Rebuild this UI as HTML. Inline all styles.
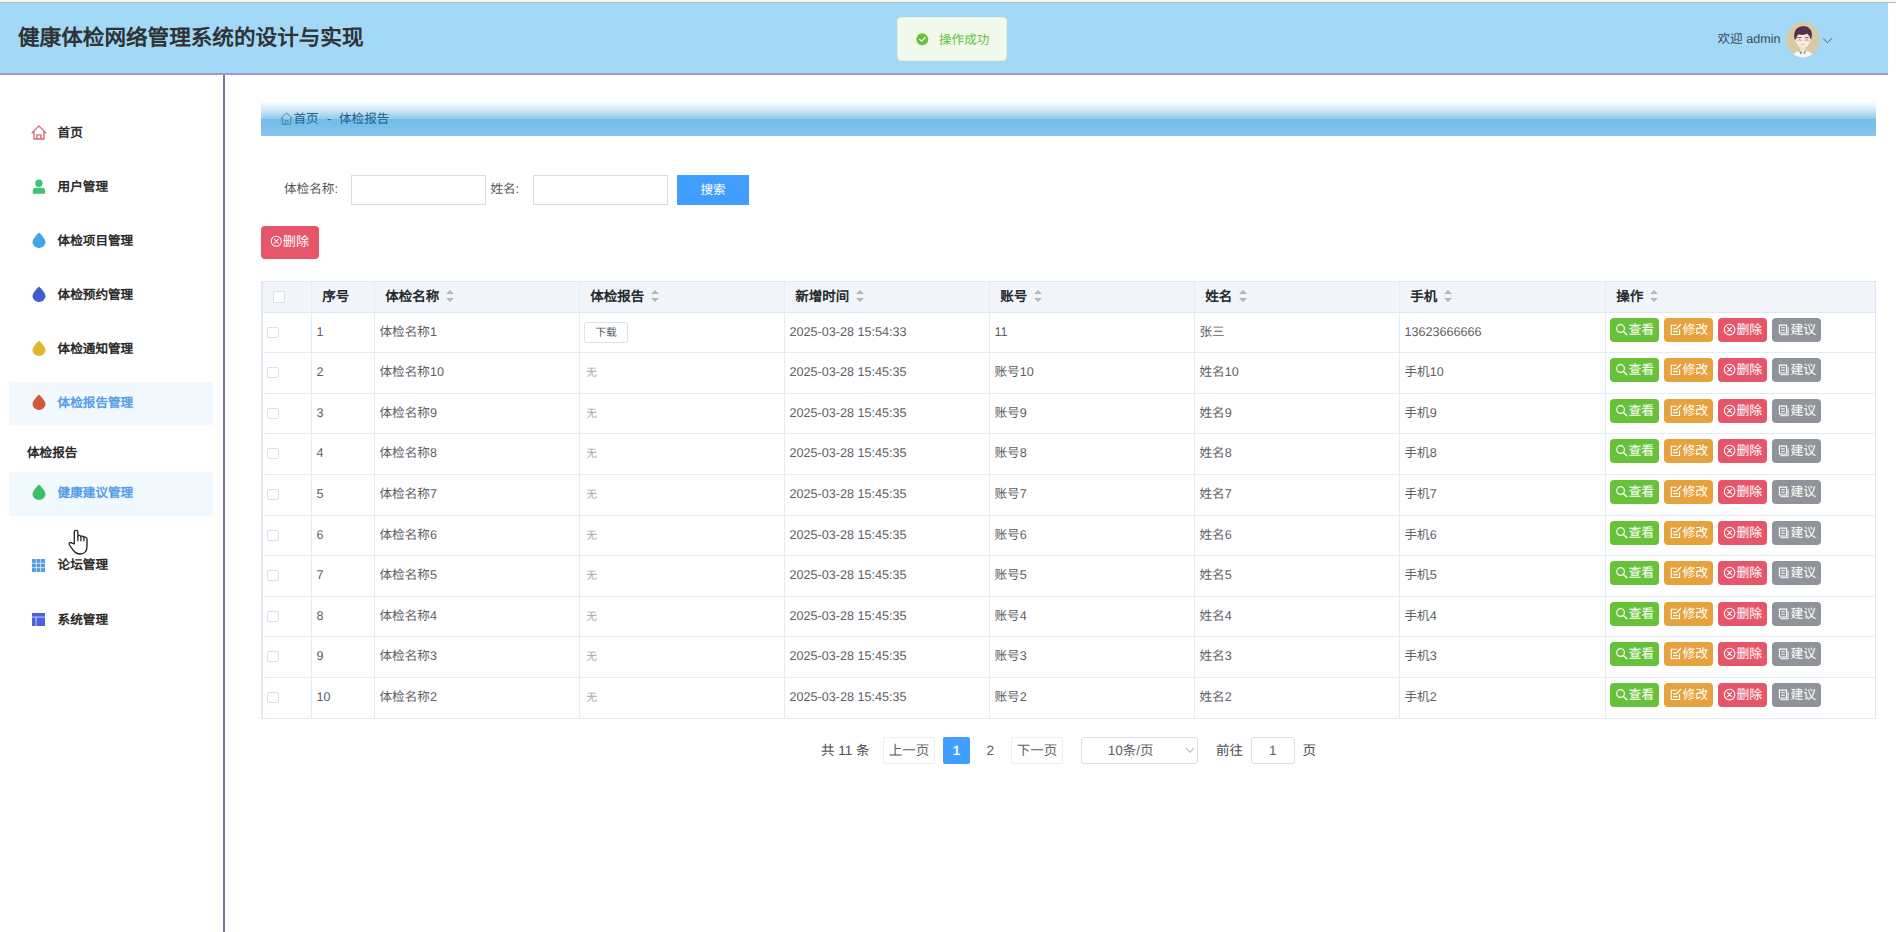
<!DOCTYPE html>
<html lang="zh-CN"><head><meta charset="utf-8"><title>体检报告</title>
<style>
*{box-sizing:border-box;margin:0;padding:0}
html,body{width:1896px;height:932px;overflow:hidden;background:#fff}
body{position:relative;font-family:"Liberation Sans",sans-serif;font-size:12.6px;color:#333;line-height:1;text-rendering:geometricPrecision}
.ic{display:inline-block;vertical-align:middle;flex:none}
.abs{position:absolute}
/* top strip + header */
.strip{position:absolute;left:0;top:0;width:1896px;height:2.8px;background:linear-gradient(#f6f8f7 0,#f3f6f5 55%,#b3bec3 78%,#b0bcc2 100%)}
.hdr{position:absolute;left:0;top:2.8px;width:1888px;height:72px;background:#a3d9f7;border-bottom:2px solid #ab94cc}
.title{position:absolute;left:18px;top:25.1px;font-size:21.6px;font-weight:bold;color:#2f3336;white-space:nowrap;line-height:26px;letter-spacing:0}
.toast{position:absolute;left:897px;top:16.6px;width:110px;height:44.8px;background:#f0f9eb;border:1px solid #e1f3d8;border-radius:4px}
.toast .tx{position:absolute;left:41px;top:15.4px;color:#67c23a;font-size:12.6px;white-space:nowrap;line-height:14px}
.welcome{position:absolute;left:1717.5px;top:31.6px;font-size:12.6px;color:#3a4a5a;white-space:nowrap;line-height:15px}
/* sidebar */
.sline{position:absolute;left:222.9px;top:75px;width:2.4px;height:857px;background:#7f71bb}
.mi{position:absolute;left:9px;width:204.4px;height:43.4px;border-radius:2px}
.mi.act{background:#f1f8fe}
.mi .tx{position:absolute;left:48.6px;top:14.5px;font-size:12.6px;font-weight:bold;color:#2b2b2b;white-space:nowrap;line-height:16px}
.mi.act .tx{color:#579de8}
.mi svg{position:absolute;left:21.8px;top:13.3px}
.sub{position:absolute;left:27px;top:444.6px;font-size:12.6px;font-weight:bold;color:#2b2b2b;white-space:nowrap;line-height:16px}
/* breadcrumb */
.bc{position:absolute;left:261px;top:102.2px;width:1615px;height:33.6px;background:linear-gradient(to bottom,#fafdff 0%,#e3f1fb 14%,#c2e1f5 30%,#a3d3f0 42%,#97ceee 48.5%,#74bde8 51%,#78bfe9 70%,#86c6eb 100%)}
.bc .tx{position:absolute;top:10.2px;font-size:12.6px;color:#1f608f;white-space:nowrap;line-height:15px}
/* search */
.lab{position:absolute;font-size:12.6px;color:#555;white-space:nowrap;line-height:15px;top:182px}
.inp{position:absolute;top:175px;height:29.5px;width:135px;border:1px solid #dcdcdc;border-radius:0;background:#fff}
.sbtn{position:absolute;left:677.2px;top:175px;width:71.8px;height:29.5px;background:#409eff;color:#fff;font-size:12.6px;text-align:center;line-height:30.4px;border-radius:0}
.del{position:absolute;left:261px;top:226px;width:58px;height:32.6px;background:#e6566b;border-radius:4px;color:#fff;font-size:13.2px;white-space:nowrap;line-height:32.8px;padding-left:9.2px}
.del svg{margin-top:-2px}
/* table */
.tbl{position:absolute;left:0;top:0}
.thead{position:absolute;left:261px;width:1615px;background:#f2f6fb;border-top:1px solid #dfe9f3;border-bottom:1px solid #dde8f3}
.tbl:before{content:"";position:absolute;left:261px;top:281px;width:2px;height:438px;background:#dfe9f5;z-index:2}
.tbl:after{content:"";position:absolute;left:1875px;top:281px;width:1px;height:438px;background:#dde9f5;z-index:2}
.vl{position:absolute;top:281px;width:1px;height:438px;background:#e2edf8}
.hl{position:absolute;left:261px;width:1615px;height:1px;background:#e3edf7}
.th{position:absolute;top:288.7px;font-size:13.5px;font-weight:bold;color:#262a30;white-space:nowrap;line-height:16px}
.caret{display:inline-block;position:relative;width:8px;height:14px;margin-left:6.6px;vertical-align:-2.6px}
.caret i{position:absolute;left:0;width:0;height:0;border:4px solid transparent}
.caret .up{top:-2.9px;border-bottom-width:4.6px;border-bottom-color:#b2b6bd}
.caret .dn{top:9.2px;border-top-width:4.6px;border-top-color:#b2b6bd}
.cb{position:absolute;width:11.6px;height:11.6px;border:1px solid #dcdfe6;border-radius:2px;background:#fff}
.hcb{left:273.2px;top:291.1px}
.tr{position:absolute;left:261px;width:1615px}
.tr .rcb{left:6.2px;top:13.6px}
.td{position:absolute;top:11.6px;font-size:12.6px;color:#5e6064;white-space:nowrap;line-height:15px}
.td.none{font-size:10.8px;color:#a8abb2;top:13.2px}
.dl{position:absolute;top:9.2px;width:43.6px;height:20.6px;border:1px solid #dfe1e6;border-radius:2.5px;font-size:10.8px;color:#5a5d63;text-align:center;line-height:21.2px;background:#fff}
.btn{position:absolute;top:5.2px;width:49px;height:23.5px;border-radius:4px;color:#fff;font-size:12.9px;white-space:nowrap;line-height:24.2px;padding-left:5px;overflow:hidden}
.btn svg{margin-top:-2.4px}
.btn.g{background:#67c23a}.btn.o{background:#e6a23c}.btn.r{background:#e6566b}.btn.y{background:#909399}
/* pagination */
.pg{position:absolute;font-size:13.5px;color:#4a4d52;white-space:nowrap;line-height:16px;top:743.2px}
.pbtn{position:absolute;top:737.3px;height:26.4px;border:1px solid #ebeef5;border-radius:2px;font-size:13.5px;color:#5c6066;text-align:center;line-height:26.2px;background:#fff;white-space:nowrap}
.pact{position:absolute;left:943px;top:737.1px;width:27px;height:26.8px;background:#409eff;color:#fff;font-weight:bold;font-size:13.5px;text-align:center;line-height:28px;border-radius:2px}

</style></head>
<body>
<svg width="0" height="0" style="position:absolute">
<defs>
<symbol id="i-search" viewBox="0 0 14 14"><circle cx="5.9" cy="5.9" r="4.1" fill="none" stroke="#fff" stroke-width="1.25"/><path d="M8.9 8.9 L12.6 12.6" stroke="#fff" stroke-width="1.5" stroke-linecap="round"/></symbol>
<symbol id="i-edit" viewBox="0 0 14 14"><path d="M8.2 2.4H2.4V12.2H11.2V6.6" fill="none" stroke="#fff" stroke-width="1.2"/><path d="M4.4 6.2H8.2M4.4 9.2H9.4" stroke="#fff" stroke-width="1.2"/><path d="M12.4 1.6L8.6 5.6" stroke="#fff" stroke-width="1.4" stroke-linecap="round"/></symbol>
<symbol id="i-close" viewBox="0 0 14 14"><circle cx="7" cy="7" r="5.6" fill="none" stroke="#fff" stroke-width="1.15"/><path d="M4.9 4.9L9.1 9.1M9.1 4.9L4.9 9.1" stroke="#fff" stroke-width="1.2" stroke-linecap="round"/></symbol>
<symbol id="i-doc" viewBox="0 0 14 14"><path d="M2.6 2.2H10.2V10.6H2.6Z" fill="none" stroke="#fff" stroke-width="1.2"/><path d="M4.4 5H8.4M4.4 7.6H8.4" stroke="#fff" stroke-width="1.1"/><path d="M3.6 12.4H11.8V4.4" fill="none" stroke="#fff" stroke-width="1.2" opacity=".8"/></symbol>
<symbol id="i-drop" viewBox="0 0 16 16"><path d="M8 0.4C8 0.4 14.5 6.2 14.5 10.2A6.5 5.8 0 0 1 1.5 10.2C1.5 6.2 8 0.4 8 0.4Z" fill="currentColor"/></symbol>
</defs>
</svg>
<div class="strip"></div>
<div class="hdr"></div>
<div class="title">健康体检网络管理系统的设计与实现</div>
<div class="toast">
<svg class="abs" style="left:18.4px;top:15.4px" width="12.6" height="12.6" viewBox="0 0 14 14"><circle cx="7" cy="7" r="6.6" fill="#67c23a"/><path d="M4 7.1L6.2 9.2L10.1 5.2" fill="none" stroke="#f0f9eb" stroke-width="1.5" stroke-linecap="round" stroke-linejoin="round"/></svg>
<span class="tx">操作成功</span>
</div>
<div class="welcome">欢迎 admin</div>
<!-- avatar -->
<svg class="abs" style="left:1785px;top:22px" width="36" height="36" viewBox="0 0 36 36">
<defs><clipPath id="avc"><ellipse cx="17.9" cy="17.7" rx="17" ry="17.7"/></clipPath></defs>
<g clip-path="url(#avc)">
<rect width="36" height="36" fill="#d6cba5"/>
<path d="M7.6 36C7.8 31 11.6 28.8 18 28.8S28.2 31 28.5 36Z" fill="#f7f8f5"/>
<path d="M15.2 24.6H20.6V28.6L18 30.6L15.2 28.6Z" fill="#fbe0d0"/>
<path d="M13.9 28.1L17.5 30.6L15.3 32.5ZM20.9 28.1L18.3 30.6L20.1 32.5Z" fill="#7fa886"/>
<ellipse cx="18" cy="18.6" rx="6.9" ry="7.3" fill="#fdeadd"/>
<ellipse cx="11.1" cy="18.8" rx="1.1" ry="1.7" fill="#f8dccb"/><ellipse cx="24.9" cy="18.8" rx="1.1" ry="1.7" fill="#f8dccb"/>
<path d="M9.6 17.3C8.4 12 10 7.2 13.2 5.6C16.2 3.9 21.2 4 23.6 5.7C26.8 7.8 27.7 12.2 26.3 17C25.7 17.8 25.2 16.2 25 14.6C24 13.8 23 12.7 22.6 11.6C20.4 13 16 13.3 13.6 12.3C12.6 13.2 11.8 14.2 11.5 15.5C11.3 16.8 10.6 17.9 9.6 17.3Z" fill="#56304a"/>
<path d="M12.9 15.6H16.2M20.1 15.7H23.2" stroke="#4a3340" stroke-width=".9" stroke-linecap="round" fill="none" opacity=".85"/>
<path d="M13 18.3Q14.6 16.9 16.2 18.3M20 18.3Q21.6 16.9 23.2 18.3" fill="none" stroke="#8a6a66" stroke-width=".7" stroke-linecap="round"/>
<path d="M16.3 21.9Q17.7 23.4 19.1 21.9Z" fill="#e27482"/>
</g></svg>
<svg class="abs" style="left:1822px;top:36.8px" width="11" height="8" viewBox="0 0 11 8"><path d="M1 1.3L5.4 5.8L9.8 1.3" fill="none" stroke="#3b6a90" stroke-width="1"/></svg>

<!-- sidebar -->
<div class="sline"></div>
<div class="mi" style="top:110.4px"><svg width="16" height="16" viewBox="0 0 16 16"><path d="M1.1 8.9L7.9 1.9L14.8 8.9M3 7.6V15H12.9V7.6M5.9 15V10.9H9.9V15" fill="none" stroke="#d7666c" stroke-width="1.35" stroke-linejoin="round" stroke-linecap="round"/></svg><span class="tx">首页</span></div>
<div class="mi" style="top:164.5px"><svg width="16" height="16" viewBox="0 0 16 16"><circle cx="7.9" cy="5.2" r="3.7" fill="#3cc474"/><path d="M1.8 15.8V13Q1.8 9.7 5.2 9.7H10.7Q14.1 9.7 14.1 13V15.8Z" fill="#3cc474"/></svg><span class="tx">用户管理</span></div>
<div class="mi" style="top:218.6px"><svg width="16" height="16" style="color:#40a6e6;"><use href="#i-drop"/></svg><span class="tx">体检项目管理</span></div>
<div class="mi" style="top:272.7px"><svg width="16" height="16" style="color:#3f5bd6;"><use href="#i-drop"/></svg><span class="tx">体检预约管理</span></div>
<div class="mi" style="top:326.8px"><svg width="16" height="16" style="color:#e0b62c;"><use href="#i-drop"/></svg><span class="tx">体检通知管理</span></div>
<div class="mi act" style="top:381.9px"><svg width="16" height="16" style="color:#d3573a;top:11.9px"><use href="#i-drop"/></svg><span class="tx" style="top:12.9px">体检报告管理</span></div>
<div class="sub">体检报告</div>
<div class="mi act" style="top:472.3px"><svg width="16" height="16" style="color:#3dc062;top:12.1px"><use href="#i-drop"/></svg><span class="tx" style="top:13px">健康建议管理</span></div>
<div class="mi" style="top:542.6px"><svg width="13" height="13" viewBox="0 0 13 13" style="left:23.1px;top:16.1px"><g fill="#549ede"><rect x="0" y="0" width="3.9" height="3.9"/><rect x="4.55" y="0" width="3.9" height="3.9"/><rect x="9.1" y="0" width="3.9" height="3.9"/><rect x="0" y="4.55" width="3.9" height="3.9"/><rect x="4.55" y="4.55" width="3.9" height="3.9"/><rect x="9.1" y="4.55" width="3.9" height="3.9"/><rect x="0" y="9.1" width="3.9" height="3.9"/><rect x="4.55" y="9.1" width="3.9" height="3.9"/><rect x="9.1" y="9.1" width="3.9" height="3.9"/></g></svg><span class="tx" style="top:14.8px">论坛管理</span></div>
<div class="mi" style="top:596.6px"><svg width="13" height="13" viewBox="0 0 13 13" style="left:23.1px;top:16.1px"><g fill="#4c5fdd"><rect x="0" y="0" width="13" height="3.7"/><rect x="0" y="4.4" width="3.7" height="8.6"/><rect x="4.4" y="4.4" width="8.6" height="8.6"/></g></svg><span class="tx" style="top:15px">系统管理</span></div>

<!-- breadcrumb -->
<div class="bc">
<svg class="abs" style="left:18.8px;top:9.6px" width="13" height="13" viewBox="0 0 13 13"><path d="M0.8 6.6L6.5 0.9L12.2 6.6M2.3 5.4V12.3H10.7V5.4M5 12.3V8.6H8V12.3" fill="none" stroke="#4d88b0" stroke-width="1" stroke-linejoin="round"/></svg>
<span class="tx" style="left:32.4px">首页</span><span class="tx" style="left:66px">-</span><span class="tx" style="left:78px">体检报告</span>
</div>

<!-- search -->
<span class="lab" style="left:284px">体检名称:</span>
<div class="inp" style="left:351.2px"></div>
<span class="lab" style="left:490.4px">姓名:</span>
<div class="inp" style="left:533px"></div>
<div class="sbtn">搜索</div>
<div class="del"><svg class="ic" width="12.6" height="12.6"><use href="#i-close"/></svg>删除</div>
<div class="tbl">
<div class="thead" style="top:281px;height:32px"></div>
<i class="vl" style="left:311px"></i><i class="vl" style="left:374px"></i><i class="vl" style="left:579px"></i><i class="vl" style="left:784px"></i><i class="vl" style="left:989px"></i><i class="vl" style="left:1194px"></i><i class="vl" style="left:1399px"></i><i class="vl" style="left:1605px"></i>
<i class="hl" style="top:352px"></i><i class="hl" style="top:393px"></i><i class="hl" style="top:433px"></i><i class="hl" style="top:474px"></i><i class="hl" style="top:515px"></i><i class="hl" style="top:555px"></i><i class="hl" style="top:596px"></i><i class="hl" style="top:636px"></i><i class="hl" style="top:677px"></i><i class="hl" style="top:718px"></i>
<span class="cb hcb"></span>
<div class="th" style="left:322.2px">序号</div>
<div class="th" style="left:385.2px">体检名称<span class="caret"><i class="up"></i><i class="dn"></i></span></div>
<div class="th" style="left:590.2px">体检报告<span class="caret"><i class="up"></i><i class="dn"></i></span></div>
<div class="th" style="left:795.2px">新增时间<span class="caret"><i class="up"></i><i class="dn"></i></span></div>
<div class="th" style="left:1000.2px">账号<span class="caret"><i class="up"></i><i class="dn"></i></span></div>
<div class="th" style="left:1205.2px">姓名<span class="caret"><i class="up"></i><i class="dn"></i></span></div>
<div class="th" style="left:1410.2px">手机<span class="caret"><i class="up"></i><i class="dn"></i></span></div>
<div class="th" style="left:1616.2px">操作<span class="caret"><i class="up"></i><i class="dn"></i></span></div>
<div class="tr" style="top:313px;height:39px"><span class="cb rcb"></span><span class="td" style="left:55.5px">1</span><span class="td" style="left:118.5px">体检名称1</span><span class="dl" style="left:323.3px">下载</span><span class="td" style="left:528.5px">2025-03-28 15:54:33</span><span class="td" style="left:733.5px">11</span><span class="td" style="left:938.5px">张三</span><span class="td" style="left:1143.5px">13623666666</span><span class="btn g" style="left:1349.2px"><svg class="ic" width="13.2" height="13.2" style=""><use href="#i-search"/></svg>查看</span><span class="btn o" style="left:1403.2px"><svg class="ic" width="13.2" height="13.2" style=""><use href="#i-edit"/></svg>修改</span><span class="btn r" style="left:1457.3px"><svg class="ic" width="13.2" height="13.2" style=""><use href="#i-close"/></svg>删除</span><span class="btn y" style="left:1511.3px"><svg class="ic" width="13.2" height="13.2" style=""><use href="#i-doc"/></svg>建议</span></div>
<div class="tr" style="top:353px;height:40px"><span class="cb rcb"></span><span class="td" style="left:55.5px">2</span><span class="td" style="left:118.5px">体检名称10</span><span class="td none" style="left:325.3px">无</span><span class="td" style="left:528.5px">2025-03-28 15:45:35</span><span class="td" style="left:733.5px">账号10</span><span class="td" style="left:938.5px">姓名10</span><span class="td" style="left:1143.5px">手机10</span><span class="btn g" style="left:1349.2px"><svg class="ic" width="13.2" height="13.2" style=""><use href="#i-search"/></svg>查看</span><span class="btn o" style="left:1403.2px"><svg class="ic" width="13.2" height="13.2" style=""><use href="#i-edit"/></svg>修改</span><span class="btn r" style="left:1457.3px"><svg class="ic" width="13.2" height="13.2" style=""><use href="#i-close"/></svg>删除</span><span class="btn y" style="left:1511.3px"><svg class="ic" width="13.2" height="13.2" style=""><use href="#i-doc"/></svg>建议</span></div>
<div class="tr" style="top:394px;height:39px"><span class="cb rcb"></span><span class="td" style="left:55.5px">3</span><span class="td" style="left:118.5px">体检名称9</span><span class="td none" style="left:325.3px">无</span><span class="td" style="left:528.5px">2025-03-28 15:45:35</span><span class="td" style="left:733.5px">账号9</span><span class="td" style="left:938.5px">姓名9</span><span class="td" style="left:1143.5px">手机9</span><span class="btn g" style="left:1349.2px"><svg class="ic" width="13.2" height="13.2" style=""><use href="#i-search"/></svg>查看</span><span class="btn o" style="left:1403.2px"><svg class="ic" width="13.2" height="13.2" style=""><use href="#i-edit"/></svg>修改</span><span class="btn r" style="left:1457.3px"><svg class="ic" width="13.2" height="13.2" style=""><use href="#i-close"/></svg>删除</span><span class="btn y" style="left:1511.3px"><svg class="ic" width="13.2" height="13.2" style=""><use href="#i-doc"/></svg>建议</span></div>
<div class="tr" style="top:434px;height:40px"><span class="cb rcb"></span><span class="td" style="left:55.5px">4</span><span class="td" style="left:118.5px">体检名称8</span><span class="td none" style="left:325.3px">无</span><span class="td" style="left:528.5px">2025-03-28 15:45:35</span><span class="td" style="left:733.5px">账号8</span><span class="td" style="left:938.5px">姓名8</span><span class="td" style="left:1143.5px">手机8</span><span class="btn g" style="left:1349.2px"><svg class="ic" width="13.2" height="13.2" style=""><use href="#i-search"/></svg>查看</span><span class="btn o" style="left:1403.2px"><svg class="ic" width="13.2" height="13.2" style=""><use href="#i-edit"/></svg>修改</span><span class="btn r" style="left:1457.3px"><svg class="ic" width="13.2" height="13.2" style=""><use href="#i-close"/></svg>删除</span><span class="btn y" style="left:1511.3px"><svg class="ic" width="13.2" height="13.2" style=""><use href="#i-doc"/></svg>建议</span></div>
<div class="tr" style="top:475px;height:40px"><span class="cb rcb"></span><span class="td" style="left:55.5px">5</span><span class="td" style="left:118.5px">体检名称7</span><span class="td none" style="left:325.3px">无</span><span class="td" style="left:528.5px">2025-03-28 15:45:35</span><span class="td" style="left:733.5px">账号7</span><span class="td" style="left:938.5px">姓名7</span><span class="td" style="left:1143.5px">手机7</span><span class="btn g" style="left:1349.2px"><svg class="ic" width="13.2" height="13.2" style=""><use href="#i-search"/></svg>查看</span><span class="btn o" style="left:1403.2px"><svg class="ic" width="13.2" height="13.2" style=""><use href="#i-edit"/></svg>修改</span><span class="btn r" style="left:1457.3px"><svg class="ic" width="13.2" height="13.2" style=""><use href="#i-close"/></svg>删除</span><span class="btn y" style="left:1511.3px"><svg class="ic" width="13.2" height="13.2" style=""><use href="#i-doc"/></svg>建议</span></div>
<div class="tr" style="top:516px;height:39px"><span class="cb rcb"></span><span class="td" style="left:55.5px">6</span><span class="td" style="left:118.5px">体检名称6</span><span class="td none" style="left:325.3px">无</span><span class="td" style="left:528.5px">2025-03-28 15:45:35</span><span class="td" style="left:733.5px">账号6</span><span class="td" style="left:938.5px">姓名6</span><span class="td" style="left:1143.5px">手机6</span><span class="btn g" style="left:1349.2px"><svg class="ic" width="13.2" height="13.2" style=""><use href="#i-search"/></svg>查看</span><span class="btn o" style="left:1403.2px"><svg class="ic" width="13.2" height="13.2" style=""><use href="#i-edit"/></svg>修改</span><span class="btn r" style="left:1457.3px"><svg class="ic" width="13.2" height="13.2" style=""><use href="#i-close"/></svg>删除</span><span class="btn y" style="left:1511.3px"><svg class="ic" width="13.2" height="13.2" style=""><use href="#i-doc"/></svg>建议</span></div>
<div class="tr" style="top:556px;height:40px"><span class="cb rcb"></span><span class="td" style="left:55.5px">7</span><span class="td" style="left:118.5px">体检名称5</span><span class="td none" style="left:325.3px">无</span><span class="td" style="left:528.5px">2025-03-28 15:45:35</span><span class="td" style="left:733.5px">账号5</span><span class="td" style="left:938.5px">姓名5</span><span class="td" style="left:1143.5px">手机5</span><span class="btn g" style="left:1349.2px"><svg class="ic" width="13.2" height="13.2" style=""><use href="#i-search"/></svg>查看</span><span class="btn o" style="left:1403.2px"><svg class="ic" width="13.2" height="13.2" style=""><use href="#i-edit"/></svg>修改</span><span class="btn r" style="left:1457.3px"><svg class="ic" width="13.2" height="13.2" style=""><use href="#i-close"/></svg>删除</span><span class="btn y" style="left:1511.3px"><svg class="ic" width="13.2" height="13.2" style=""><use href="#i-doc"/></svg>建议</span></div>
<div class="tr" style="top:597px;height:39px"><span class="cb rcb"></span><span class="td" style="left:55.5px">8</span><span class="td" style="left:118.5px">体检名称4</span><span class="td none" style="left:325.3px">无</span><span class="td" style="left:528.5px">2025-03-28 15:45:35</span><span class="td" style="left:733.5px">账号4</span><span class="td" style="left:938.5px">姓名4</span><span class="td" style="left:1143.5px">手机4</span><span class="btn g" style="left:1349.2px"><svg class="ic" width="13.2" height="13.2" style=""><use href="#i-search"/></svg>查看</span><span class="btn o" style="left:1403.2px"><svg class="ic" width="13.2" height="13.2" style=""><use href="#i-edit"/></svg>修改</span><span class="btn r" style="left:1457.3px"><svg class="ic" width="13.2" height="13.2" style=""><use href="#i-close"/></svg>删除</span><span class="btn y" style="left:1511.3px"><svg class="ic" width="13.2" height="13.2" style=""><use href="#i-doc"/></svg>建议</span></div>
<div class="tr" style="top:637px;height:40px"><span class="cb rcb"></span><span class="td" style="left:55.5px">9</span><span class="td" style="left:118.5px">体检名称3</span><span class="td none" style="left:325.3px">无</span><span class="td" style="left:528.5px">2025-03-28 15:45:35</span><span class="td" style="left:733.5px">账号3</span><span class="td" style="left:938.5px">姓名3</span><span class="td" style="left:1143.5px">手机3</span><span class="btn g" style="left:1349.2px"><svg class="ic" width="13.2" height="13.2" style=""><use href="#i-search"/></svg>查看</span><span class="btn o" style="left:1403.2px"><svg class="ic" width="13.2" height="13.2" style=""><use href="#i-edit"/></svg>修改</span><span class="btn r" style="left:1457.3px"><svg class="ic" width="13.2" height="13.2" style=""><use href="#i-close"/></svg>删除</span><span class="btn y" style="left:1511.3px"><svg class="ic" width="13.2" height="13.2" style=""><use href="#i-doc"/></svg>建议</span></div>
<div class="tr" style="top:678px;height:40px"><span class="cb rcb"></span><span class="td" style="left:55.5px">10</span><span class="td" style="left:118.5px">体检名称2</span><span class="td none" style="left:325.3px">无</span><span class="td" style="left:528.5px">2025-03-28 15:45:35</span><span class="td" style="left:733.5px">账号2</span><span class="td" style="left:938.5px">姓名2</span><span class="td" style="left:1143.5px">手机2</span><span class="btn g" style="left:1349.2px"><svg class="ic" width="13.2" height="13.2" style=""><use href="#i-search"/></svg>查看</span><span class="btn o" style="left:1403.2px"><svg class="ic" width="13.2" height="13.2" style=""><use href="#i-edit"/></svg>修改</span><span class="btn r" style="left:1457.3px"><svg class="ic" width="13.2" height="13.2" style=""><use href="#i-close"/></svg>删除</span><span class="btn y" style="left:1511.3px"><svg class="ic" width="13.2" height="13.2" style=""><use href="#i-doc"/></svg>建议</span></div>
</div>
<!-- pagination -->
<span class="pg" style="left:821px">共 11 条</span>
<div class="pbtn" style="left:883px;width:51.8px">上一页</div>
<div class="pact">1</div>
<span class="pg" style="left:986.6px;color:#5c6066">2</span>
<div class="pbtn" style="left:1011px;width:51.8px">下一页</div>
<div class="pbtn" style="left:1081.2px;width:116.6px;border-color:#dcdfe6;border-radius:3px;text-align:left;padding-left:25.6px">10条/页<svg class="abs" style="right:1.6px;top:8.6px" width="10" height="7" viewBox="0 0 10 7"><path d="M1 1.2L5 5.2L9 1.2" fill="none" stroke="#b4b8bf" stroke-width="1.1"/></svg></div>
<span class="pg" style="left:1216px">前往</span>
<div class="pbtn" style="left:1250.6px;width:44.4px;border-color:#dcdfe6;border-radius:3px">1</div>
<span class="pg" style="left:1302.4px">页</span>
<!-- mouse cursor (hand) -->
<svg class="abs" style="left:68px;top:528.6px" width="21" height="27" viewBox="0 0 21 27"><path d="M6.3 14.9V3.1C6.3 0.9 9.9 0.9 9.9 3.1V7.5C9.9 5.9 12.9 6.1 12.9 7.9C12.9 6.6 15.9 6.9 15.9 8.7C15.9 7.6 19 8 19 10.2V17C19 22 16.4 25 12 25C8.6 25 6.8 23.4 5 21L1.5 16C0.3 14.2 2.4 12.7 3.9 14.1Z" fill="#fff" stroke="#1f1f24" stroke-width="1.3" stroke-linejoin="round"/><path d="M9.9 7.4V12.2M12.9 7.9V12.2M15.9 8.7V12.2" stroke="#1f1f24" stroke-width="1.2" fill="none"/></svg>
</body></html>
